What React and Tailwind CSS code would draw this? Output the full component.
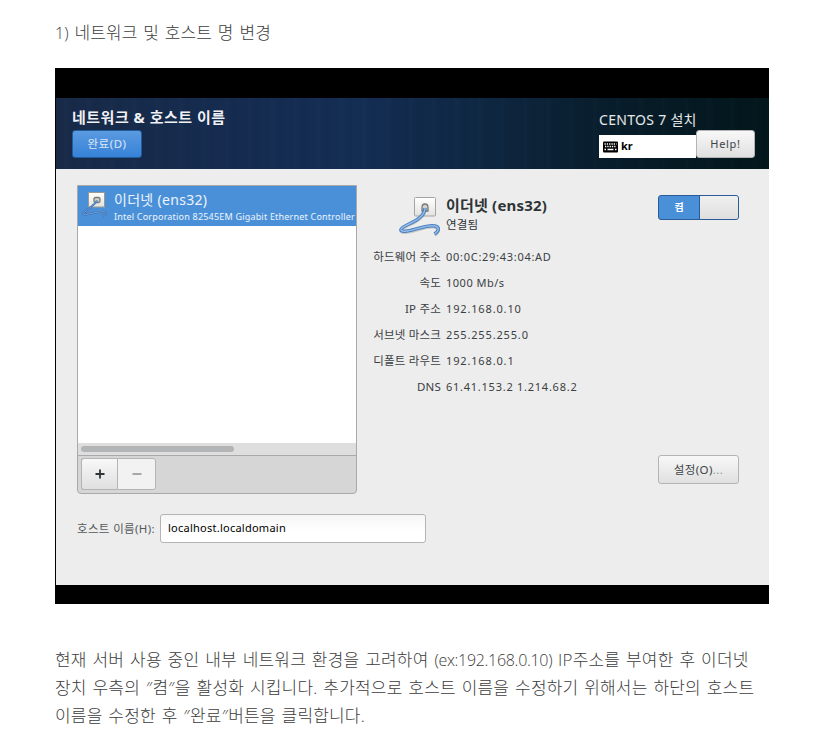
const body = "font-['Open_Sans','Noto_Sans_CJK_KR',sans-serif]";
const ui = "font-['Noto_Sans','Noto_Sans_CJK_KR',sans-serif]";

function Plate() {
  return (
    <defs>
      <linearGradient id="plate" x1="0" y1="0" x2="0" y2="1">
        <stop offset="0" stopColor="#fff" />
        <stop offset="1" stopColor="#e2e3e0" />
      </linearGradient>
    </defs>
  );
}

function CableIcon({ className }) {
  const cable = "M26 13C26 20 19 25 10 29C-1 34 0 37 8 36C18 35 28 29 36 31C41 32.500 40 36 35.500 39";
  return (
    <svg viewBox="0 0 42 42" className={className}>
      <Plate />
      <rect x="15.500" y="2.500" width="21" height="18.500" rx="1" fill="url(#plate)" stroke="#a3a5a0" />
      <path d="M23 16v-3.500q0-3.500 3-3.500t3 3.500V16z" fill="#d0d2ce" stroke="#777974" strokeWidth="1.300" />
      <path d={cable} transform="translate(0 1)" fill="none" stroke="#000" strokeOpacity="0.15" strokeWidth="3.500" />
      <path d={cable} fill="none" stroke="#4c80c0" strokeWidth="3.400" strokeLinejoin="round" />
      <path d={cable} fill="none" stroke="#94bce8" strokeWidth="1.400" />
    </svg>
  );
}

function SmallCableIcon({ className }) {
  const cable = "M16 9.500C15 13 7 18 2 22.500C0.500 26 17 19.500 24 21C26.500 22 24 24 21 25.500";
  return (
    <svg viewBox="0 0 28 28" className={className}>
      <Plate />
      <rect x="7.500" y="1.500" width="16" height="14.500" fill="url(#plate)" stroke="#9a9b90" />
      <rect x="13" y="6.500" width="6" height="5" rx="1.500" fill="#d0d2ce" stroke="#777974" strokeWidth="1.300" />
      <path d={cable} fill="none" stroke="#3b6fae" strokeWidth="2" strokeLinejoin="round" />
      <path d={cable} fill="none" stroke="#78a6dc" strokeWidth="0.900" />
    </svg>
  );
}

function KeyboardIcon() {
  return (
    <svg viewBox="0 0 15 12" className="h-3 w-[15px] shrink-0">
      <rect y="0.500" width="15" height="11" rx="1" fill="#000" />
      <path d="M1.500 3h12M2 5.500h11" stroke="#fff" strokeWidth="1.300" strokeDasharray="1.300 1" />
      <path d="M1.500 8.500h1.500M4.500 8.500h6M12 8.500h1.500" stroke="#fff" strokeWidth="1.400" />
    </svg>
  );
}

const rows = [
  ["하드웨어 주소", "00:0C:29:43:04:AD", "tracking-[0.72px]"],
  ["속도", "1000 Mb/s", "tracking-[0.5px]"],
  ["IP 주소", "192.168.0.10", "tracking-[0.85px]"],
  ["서브넷 마스크", "255.255.255.0", "tracking-[0.85px]"],
  ["디폴트 라우트", "192.168.0.1", "tracking-[0.85px]"],
  ["DNS", "61.41.153.2 1.214.68.2", "tracking-[0.75px]"],
];

const grayButton =
  "flex items-center justify-center rounded-[3px] border border-[#b4b4b4] bg-linear-to-b from-[#f8f8f8] to-[#e0e0e0] text-[#3e4446]";

function Header() {
  return (
    <header className="h-[71px] bg-[linear-gradient(90deg,#182a48_0%,#152c50_25%,#142d54_42%,#0e2742_60%,#081d2b_78%,#02161b_100%)]">
      <div className="flex h-full justify-between bg-[repeating-linear-gradient(90deg,transparent_0px,transparent_7px,rgba(255,255,255,0.012)_9px,transparent_13px,rgba(0,0,0,0.035)_17px,transparent_23px)] pr-[14px] pl-4">
        <div className="flex flex-col items-start pt-[9px]">
          <h2 className="h-[23px] text-[15px] leading-[20px] font-bold tracking-[0.5px] whitespace-nowrap text-white/95">네트워크 &amp; 호스트 이름</h2>
          <button className="flex h-7 w-[70px] items-center justify-center rounded-[3px] border border-[#215c9c] bg-linear-to-b from-[#5a9ae0] to-[#3682d8] text-[11.5px] tracking-[0.5px] text-white/80">완료(D)</button>
        </div>
        <div className="flex w-[156px] flex-col pt-3">
          <div className="h-5 text-[14px] leading-[20px] tracking-[0.3px] whitespace-nowrap text-white/90">CENTOS 7 설치</div>
          <div className="flex">
            <div className="mt-[5px] flex h-[23px] w-[97px] items-center gap-[3px] bg-white pl-1 text-[11px] font-bold text-black">
              <KeyboardIcon />
              kr
            </div>
            <button className={`${grayButton} h-7 w-[59px] text-[11px] tracking-[0.7px]`}>Help!</button>
          </div>
        </div>
      </div>
    </header>
  );
}

function DeviceList() {
  return (
    <section className="flex h-[309px] w-[280px] flex-col rounded-b-[4px] border border-[#a9a9a9] bg-[#d6d6d6]">
      <div className="flex h-10 shrink-0 items-start overflow-hidden bg-[#4a90d9] text-white/90">
        <SmallCableIcon className="mt-[5px] ml-[3px] size-7 shrink-0" />
        <div className="ml-[5px] pt-1 whitespace-nowrap">
          <div className="h-5 text-[14px] leading-[20px] tracking-[0.3px]">이더넷 (ens32)</div>
          <div className="text-[9px] leading-[14px] tracking-[0.2px]">Intel Corporation 82545EM Gigabit Ethernet Controller</div>
        </div>
      </div>
      <div className="flex-1 bg-white" />
      <div className="flex h-[13px] items-center border-b border-[#a9a9a9] bg-[#dedede] pl-[3px]">
        <div className="h-[6px] w-[153px] rounded-full bg-[#b2b4b6]" />
      </div>
      <div className="flex h-[37px] pt-[2px] pl-[3px]">
        <button className={`${grayButton} h-8 w-9 rounded-r-none border-r-0`}>
          <svg viewBox="0 0 10 10" className="size-[10px]"><path d="M0.500 5h9M5 0.500v9" stroke="#2e3436" strokeWidth="1.800" /></svg>
        </button>
        <button className="flex h-8 w-[39px] items-center justify-center rounded-r-[3px] border border-[#b4b4b4] bg-[#f2f2f2]">
          <svg viewBox="0 0 10 10" className="size-[10px]"><path d="M0.500 5h9" stroke="#8b8e8f" strokeWidth="1.500" /></svg>
        </button>
      </div>
    </section>
  );
}

function Details() {
  return (
    <section className="ml-4 flex h-[309px] flex-1 justify-between">
      <div className="flex w-[230px] flex-col">
        <div className="flex h-[59px]">
          <CableIcon className="mt-[10px] ml-[26px] size-[42px] shrink-0" />
          <div className="ml-[5px] pt-[10px] whitespace-nowrap text-[#2e3436]">
            <div className="h-5 text-[15px] leading-[20px] font-bold tracking-[0.2px]">이더넷 (ens32)</div>
            <div className="text-[11.5px] leading-[20px] tracking-[0.2px]">연결됨</div>
          </div>
        </div>
        {rows.map(([label, value, tracking]) => (
          <div key={label} className="flex h-[26px] items-center gap-[5px] text-[11px] whitespace-nowrap text-[#3a4042]">
            <div className="flex w-[68px] shrink-0 justify-end text-[11.5px] tracking-[0.2px]">{label}</div>
            <div className={tracking}>{value}</div>
          </div>
        ))}
      </div>
      <div className="flex w-[81px] flex-col justify-between pt-[10px] pb-[10px]">
        <div className="flex h-[25px] rounded-[3px] border border-[#2a5c97] bg-[#4a90d9]">
          <div className="flex flex-1 items-center justify-center text-[10px] font-bold text-white">켬</div>
          <div className="w-[39px] rounded-r-[2px] border-l border-[#2a5c97] bg-linear-to-b from-[#f0f0f0] to-[#dedede]" />
        </div>
        <button className={`${grayButton} h-[29px] text-[11.5px] tracking-[0.4px]`}>
          설정(O)<span className="opacity-50">...</span>
        </button>
      </div>
    </section>
  );
}

export default function App() {
  return (
    <main className={`h-[740px] w-[829px] overflow-hidden bg-white pl-[55px] text-[#3c3c3c] ${body}`}>
      <h1 className="h-[68px] pt-[19px] text-[17px] leading-[28px] font-light tracking-[0.1px] [word-spacing:1.3px] whitespace-nowrap">
        <span className="text-[16px]">1)</span> 네트워크 및 호스트 명 변경
      </h1>
      <div className={`h-[536px] w-[714px] bg-black pt-[30px] pl-px ${ui}`}>
        <Header />
        <div className="h-[416px] bg-[#ededed] pt-4 pr-[30px] pl-[21px]">
          <div className="flex">
            <DeviceList />
            <Details />
          </div>
          <div className="mt-5 flex items-center text-[11px]">
            <label className="w-[83px] text-[11.5px] tracking-[0.35px] whitespace-nowrap text-[#555a5b]">호스트 이름(H):</label>
            <div className="flex h-[29px] w-[266px] items-center rounded-[3px] border border-[#b4b4b4] bg-linear-to-b from-[#f6f6f6] to-white to-60% pl-[7px] tracking-[0.25px] text-black">localhost.localdomain</div>
          </div>
        </div>
      </div>
      <div className="pt-[42px] text-[17px] leading-[28px] font-light tracking-[0.18px] [word-spacing:1.3px] whitespace-nowrap">
        <p>현재 서버 사용 중인 내부 네트워크 환경을 고려하여 <span className="text-[16px] tracking-[-0.3px]">(ex:192.168.0.10)</span> IP주소를 부여한 후 이더넷</p>
        <p>장치 우측의 ″켬″을 활성화 시킵니다. 추가적으로 호스트 이름을 수정하기 위해서는 하단의 호스트</p>
        <p>이름을 수정한 후 ″완료″버튼을 클릭합니다.</p>
      </div>
    </main>
  );
}
